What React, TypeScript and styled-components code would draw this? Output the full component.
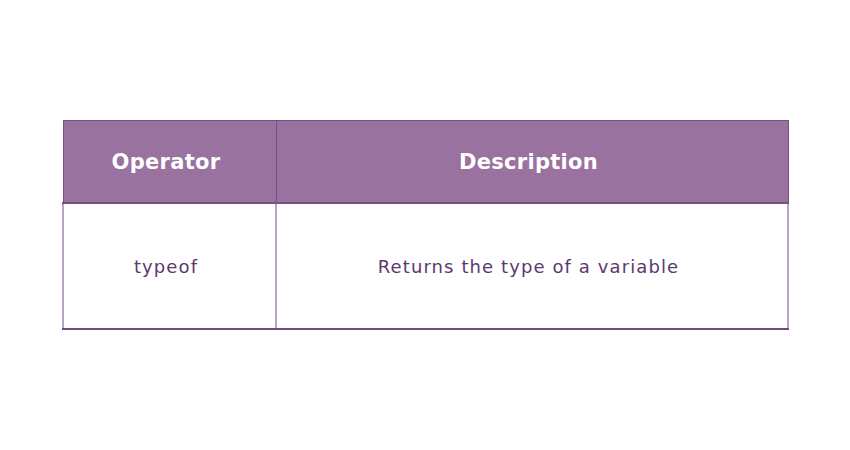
import React from "react";
import styled, { createGlobalStyle } from "styled-components";

const Global = createGlobalStyle`
  html, body { margin: 0; padding: 0; background: #ffffff; }
  body { font-family: "DejaVu Sans", sans-serif; }
`;

const Page = styled.div`
  width: 850px;
  height: 450px;
  box-sizing: border-box;
  padding: 120px 0 0 62px;
  background: #ffffff;
`;

const Table = styled.table`
  width: 727px;
  border-collapse: collapse;
  table-layout: fixed;
`;

const HeadCell = styled.th<{ $w?: number }>`
  width: ${(p) => (p.$w ? `${p.$w}px` : "auto")};
  height: 81px;
  padding: 0 7px 0 0;
  background: #9a72a0;
  border: 1px solid #7a4f87;
  border-bottom: 2px solid #7a4f87;
  color: #ffffff;
  font-family: "DejaVu Sans", sans-serif;
  font-weight: 700;
  font-size: 21px;
  letter-spacing: 0.3px;
  text-align: center;
  vertical-align: middle;
`;

const BodyCell = styled.td`
  height: 124px;
  padding: 0 7px 0 0;
  border-left: 2px solid #b9a3c6;
  border-right: 2px solid #b9a3c6;
  border-bottom: 2px solid #6f4a7c;
  color: #5b3970;
  font-family: "DejaVu Sans", sans-serif;
  font-size: 18px;
  letter-spacing: 1.1px;
  text-align: center;
  vertical-align: middle;
`;

export default function App() {
  return (
    <Page>
      <Global />
      <Table>
        <thead>
          <tr>
            <HeadCell $w={205}>Operator</HeadCell>
            <HeadCell>Description</HeadCell>
          </tr>
        </thead>
        <tbody>
          <tr>
            <BodyCell>typeof</BodyCell>
            <BodyCell>Returns the type of a variable</BodyCell>
          </tr>
        </tbody>
      </Table>
    </Page>
  );
}
